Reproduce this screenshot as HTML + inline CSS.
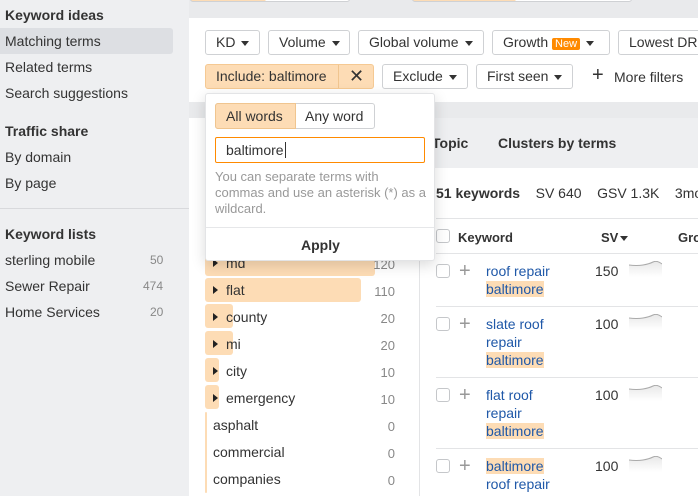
<!DOCTYPE html>
<html><head><style>
*{box-sizing:border-box;margin:0;padding:0}
body{width:698px;height:496px;overflow:hidden;background:#e9eaec;font-family:"Liberation Sans",sans-serif;font-size:14px;color:#333;position:relative}
.a{position:absolute;white-space:nowrap}
.sb{left:0;top:0;width:189px;height:496px;background:#eeeff1}
.h{font-weight:bold;color:#333}
.btn{position:absolute;height:25px;border:1px solid #cfd1d4;border-radius:3px;background:#fff;line-height:23px;padding-left:10px;color:#333}
.car{display:inline-block;width:0;height:0;border-left:4px solid transparent;border-right:4px solid transparent;border-top:5px solid #333;vertical-align:middle;margin-left:6px}
.bar{position:absolute;left:205px;height:24px;background:#fddcb5;border-radius:3px}
.kw{position:absolute;left:213px}
.tri{display:inline-block;width:0;height:0;border-top:4px solid transparent;border-bottom:4px solid transparent;border-left:5px solid #222;margin-right:8px;vertical-align:1px}
.n{position:absolute;right:303px;color:#888;font-size:13px}
.cb{position:absolute;left:436px;width:14px;height:14px;border:1px solid #c5c7ca;border-radius:3px;background:#fff}
.pl{position:absolute;left:459px;color:#999;font-size:20px;line-height:14px}
.lk{position:absolute;left:486px;color:#1f58a8;line-height:18px}
.hl{background:#fddcb5}
.sv{position:absolute;left:595px}
.spark{position:absolute;left:629px;width:33px;height:16px}
.ln{position:absolute;left:436px;right:0;height:1px;background:#e3e4e6}
</style></head><body>
<div class="a sb"></div>
<div class="a h" style="left:5px;top:7px">Keyword ideas</div>
<div class="a" style="left:0;top:28px;width:173px;height:26px;background:#dddfe3;border-radius:0 3px 3px 0"></div>
<div class="a" style="left:5px;top:33px">Matching terms</div>
<div class="a" style="left:5px;top:59px">Related terms</div>
<div class="a" style="left:5px;top:85px">Search suggestions</div>
<div class="a h" style="left:5px;top:123px">Traffic share</div>
<div class="a" style="left:5px;top:149px">By domain</div>
<div class="a" style="left:5px;top:175px">By page</div>
<div class="a" style="left:0;top:208px;width:189px;height:1px;background:#d8d9dc"></div>
<div class="a h" style="left:5px;top:226px">Keyword lists</div>
<div class="a" style="left:5px;top:252px">sterling mobile</div><div class="a" style="left:150px;top:253px;color:#888;font-size:12px">50</div>
<div class="a" style="left:5px;top:278px">Sewer Repair</div><div class="a" style="left:143px;top:279px;color:#888;font-size:12px">474</div>
<div class="a" style="left:5px;top:304px">Home Services</div><div class="a" style="left:150px;top:305px;color:#888;font-size:12px">20</div>

<div class="a" style="left:190px;top:-4px;width:160px;height:6px;border:1px solid #cfd1d4;border-radius:3px;background:linear-gradient(90deg,#fddcb5 47%,#fff 47%)"></div>
<div class="a" style="left:412px;top:-4px;width:220px;height:6px;border:1px solid #cfd1d4;border-radius:3px;background:linear-gradient(90deg,#fddcb5 47%,#fff 47%)"></div>
<div class="a" style="left:189px;top:18px;width:509px;height:84px;background:#fff"></div>
<div class="btn" style="left:205px;top:30px;width:55px">KD<span class="car"></span></div>
<div class="btn" style="left:268px;top:30px;width:82px">Volume<span class="car"></span></div>
<div class="btn" style="left:358px;top:30px;width:126px">Global volume<span class="car"></span></div>
<div class="btn" style="left:492px;top:30px;width:118px">Growth <span style="background:#ff8a00;color:#fff;font-size:11px;padding:0 3px;border-radius:2px">New</span><span class="car"></span></div>
<div class="btn" style="left:618px;top:30px;width:90px">Lowest DR</div>
<div class="btn" style="left:205px;top:64px;width:169px;background:#fddcb5;border-color:#f5c993">Include: baltimore<span style="position:absolute;left:132px;top:0;width:1px;height:23px;background:#f0c58f"></span><span style="position:absolute;left:143px;top:0;font-size:18px">✕</span></div>
<div class="btn" style="left:382px;top:64px;width:86px">Exclude<span class="car"></span></div>
<div class="btn" style="left:476px;top:64px;width:97px">First seen<span class="car"></span></div>
<div class="a" style="left:592px;top:65px;font-size:20px;line-height:20px">+</div>
<div class="a" style="left:614px;top:69px">More filters</div>

<div class="a" style="left:189px;top:118px;width:509px;height:378px;background:#fff"></div>
<div class="a" style="left:420px;top:118px;width:278px;height:50px;background:#eeeff1"></div>
<div class="a h" style="left:432px;top:135px">Topic</div>
<div class="a h" style="left:498px;top:135px">Clusters by terms</div>
<div class="a" style="left:419px;top:168px;width:1px;height:328px;background:#e3e4e6"></div>
<div class="a" style="left:436px;top:185px"><b>51 keywords</b>&nbsp;&nbsp;&nbsp;&nbsp;SV 640&nbsp;&nbsp;&nbsp;&nbsp;GSV 1.3K&nbsp;&nbsp;&nbsp;&nbsp;3mo</div>
<div class="ln" style="top:218px"></div>
<div class="cb" style="top:229px"></div>
<div class="a h" style="left:458px;top:230px;font-size:13px">Keyword</div>
<div class="a h" style="left:601px;top:230px;font-size:13px">SV<span class="car" style="margin-left:2px"></span></div>
<div class="a h" style="left:678px;top:230px;font-size:13px">Gro</div>
<div class="ln" style="top:253px"></div>

<svg width="0" height="0" style="position:absolute"><defs><linearGradient id="g" x1="0" y1="0" x2="0" y2="1"><stop offset="0" stop-color="#e8e8e8"/><stop offset="1" stop-color="#fff"/></linearGradient></defs></svg>
<div class="cb" style="top:264px"></div><div class="pl" style="top:264px">+</div>
<div class="lk" style="top:262px">roof repair<br><span class="hl">baltimore</span></div><div class="sv" style="top:263px">150</div><svg class="spark" style="top:261px" viewBox="0 0 33 16"><path d="M0 4 Q8 5 14 4 T24 1 T33 3 L33 16 L0 16Z" fill="url(#g)"/><path d="M0 4 Q8 5 14 4 T24 1 T33 3" fill="none" stroke="#aaa"/></svg>
<div class="ln" style="top:306px"></div>
<div class="cb" style="top:317px"></div><div class="pl" style="top:317px">+</div>
<div class="lk" style="top:315px">slate roof<br>repair<br><span class="hl">baltimore</span></div><div class="sv" style="top:316px">100</div><svg class="spark" style="top:314px" viewBox="0 0 33 16"><path d="M0 4 Q8 5 14 4 T24 1 T33 3 L33 16 L0 16Z" fill="url(#g)"/><path d="M0 4 Q8 5 14 4 T24 1 T33 3" fill="none" stroke="#aaa"/></svg>
<div class="ln" style="top:377px"></div>
<div class="cb" style="top:388px"></div><div class="pl" style="top:388px">+</div>
<div class="lk" style="top:386px">flat roof<br>repair<br><span class="hl">baltimore</span></div><div class="sv" style="top:387px">100</div><svg class="spark" style="top:385px" viewBox="0 0 33 16"><path d="M0 4 Q8 5 14 4 T24 1 T33 3 L33 16 L0 16Z" fill="url(#g)"/><path d="M0 4 Q8 5 14 4 T24 1 T33 3" fill="none" stroke="#aaa"/></svg>
<div class="ln" style="top:448px"></div>
<div class="cb" style="top:459px"></div><div class="pl" style="top:459px">+</div>
<div class="lk" style="top:457px"><span class="hl">baltimore</span><br>roof repair</div><div class="sv" style="top:458px">100</div><svg class="spark" style="top:456px" viewBox="0 0 33 16"><path d="M0 4 Q8 5 14 4 T24 1 T33 3 L33 16 L0 16Z" fill="url(#g)"/><path d="M0 4 Q8 5 14 4 T24 1 T33 3" fill="none" stroke="#aaa"/></svg>

<div class="bar" style="top:252px;width:170px"></div>
<div class="bar" style="top:278px;width:156px"></div>
<div class="bar" style="top:304px;width:28px"></div>
<div class="bar" style="top:331px;width:28px"></div>
<div class="bar" style="top:358px;width:14px"></div>
<div class="bar" style="top:385px;width:14px"></div>
<div class="bar" style="top:412px;width:2px;height:81px"></div>
<div class="kw" style="top:255px"><span class="tri"></span>md</div><div class="n" style="top:257px">120</div>
<div class="kw" style="top:282px"><span class="tri"></span>flat</div><div class="n" style="top:284px">110</div>
<div class="kw" style="top:309px"><span class="tri"></span>county</div><div class="n" style="top:311px">20</div>
<div class="kw" style="top:336px"><span class="tri"></span>mi</div><div class="n" style="top:338px">20</div>
<div class="kw" style="top:363px"><span class="tri"></span>city</div><div class="n" style="top:365px">10</div>
<div class="kw" style="top:390px"><span class="tri"></span>emergency</div><div class="n" style="top:392px">10</div>
<div class="kw" style="top:417px">asphalt</div><div class="n" style="top:419px">0</div>
<div class="kw" style="top:444px">commercial</div><div class="n" style="top:446px">0</div>
<div class="kw" style="top:471px">companies</div><div class="n" style="top:473px">0</div>

<div class="a" style="left:205px;top:93px;width:230px;height:168px;background:#fff;border:1px solid #e3e4e6;border-radius:3px;box-shadow:0 4px 14px rgba(0,0,0,.15)"></div>
<div class="a" style="left:215px;top:103px;width:160px;height:26px;border:1px solid #cfd1d4;border-radius:3px;background:#fff"></div>
<div class="a" style="left:215px;top:103px;width:81px;height:26px;background:#fddcb5;border:1px solid #f0c58f;border-radius:3px 0 0 3px"></div>
<div class="a" style="left:226px;top:108px">All words</div>
<div class="a" style="left:305px;top:108px">Any word</div>
<div class="a" style="left:215px;top:137px;width:210px;height:26px;border:1px solid #ff8a00;border-radius:2px"></div>
<div class="a" style="left:226px;top:142px">baltimore<span style="border-left:1px solid #333;margin-left:1px"></span></div>
<div class="a" style="left:215px;top:169px;color:#999;font-size:13px;line-height:16px">You can separate terms with<br>commas and use an asterisk (*) as a<br>wildcard.</div>
<div class="a" style="left:206px;top:227px;width:228px;height:1px;background:#e6e7e9"></div>
<div class="a h" style="left:301px;top:237px">Apply</div>
</body></html>
